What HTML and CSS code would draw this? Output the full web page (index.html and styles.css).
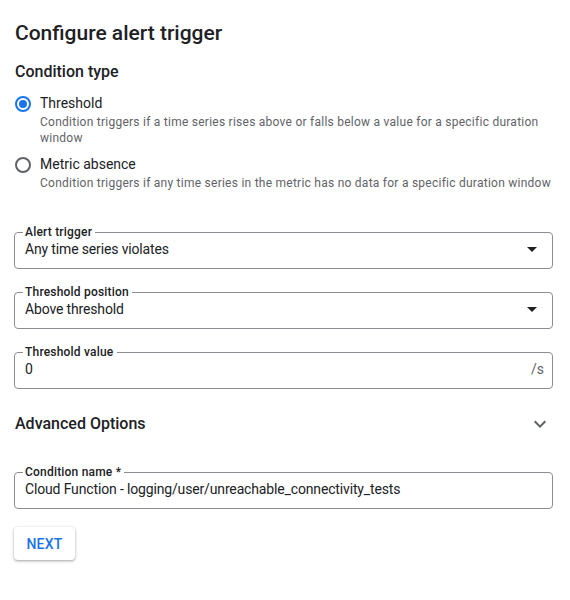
FILE: index.html
```html
<!DOCTYPE html>
<html lang="en">
<head>
  <meta charset="UTF-8" />
  <meta name="viewport" content="width=device-width, initial-scale=1.0" />
  <title>Configure alert trigger</title>
  <link rel="stylesheet" href="styles.css">
</head>
<body>
  <div class="panel">
    <h1 class="title">Configure alert trigger</h1>

    <h2 class="section-title">Condition type</h2>
    <div class="radio-group">
      <label class="radio-row">
        <span class="radio checked"></span>
        <span class="radio-text">
          <span class="radio-label">Threshold</span>
          <span class="radio-desc">Condition triggers if a time series rises above or falls below a value for a specific duration window</span>
        </span>
      </label>
      <label class="radio-row">
        <span class="radio"></span>
        <span class="radio-text">
          <span class="radio-label">Metric absence</span>
          <span class="radio-desc">Condition triggers if any time series in the metric has no data for a specific duration window</span>
        </span>
      </label>
    </div>

    <div class="fields">
      <fieldset class="field">
        <legend>Alert trigger</legend>
        <div class="field-row">
          <span class="field-value">Any time series violates</span>
          <span class="caret"></span>
        </div>
      </fieldset>
      <fieldset class="field">
        <legend>Threshold position</legend>
        <div class="field-row">
          <span class="field-value">Above threshold</span>
          <span class="caret"></span>
        </div>
      </fieldset>
      <fieldset class="field">
        <legend>Threshold value</legend>
        <div class="field-row">
          <span class="field-value">0</span>
          <span class="suffix">/s</span>
        </div>
      </fieldset>
    </div>

    <div class="advanced">
      <span>Advanced Options</span>
      <svg class="chevron" width="24" height="24" viewBox="0 0 24 24"><path d="M7.41 8.59 12 13.17l4.59-4.58L18 10l-6 6-6-6z" fill="#5f6368"/></svg>
    </div>

    <fieldset class="field name-field">
      <legend>Condition name *</legend>
      <div class="field-row">
        <span class="field-value">Cloud Function - logging/user/unreachable_connectivity_tests</span>
      </div>
    </fieldset>

    <button class="next-btn" type="button">NEXT</button>
  </div>
</body>
</html>
```

FILE: styles.css
```css
* {
  margin: 0;
  padding: 0;
  box-sizing: border-box;
}

body {
  font-family: Roboto, "Noto Sans", sans-serif;
  background: #fff;
  color: #202124;
}

.panel {
  width: 553px;
  padding: 19px 0 40px 14px;
}

.title {
  font-size: 21px;
  font-weight: 500;
  line-height: 28px;
  padding-left: 1px;
}

.section-title {
  margin-top: 13px;
  font-size: 16px;
  font-weight: 500;
  line-height: 24px;
  padding-left: 1px;
}

.radio-group {
  display: flex;
  flex-direction: column;
  gap: 8px;
  margin-top: 9px;
}

.radio-row {
  display: flex;
  gap: 9px;
  padding-left: 1px;
}

.radio {
  flex-shrink: 0;
  width: 16px;
  height: 16px;
  margin-top: 3px;
  border: 2px solid #5f6368;
  border-radius: 50%;
  display: flex;
  align-items: center;
  justify-content: center;
}

.radio.checked {
  border-color: #1a73e8;
}

.radio.checked::after {
  content: "";
  width: 8px;
  height: 8px;
  border-radius: 50%;
  background: #1a73e8;
}

.radio-text {
  display: flex;
  flex-direction: column;
}

.radio-label {
  font-size: 14px;
  line-height: 20px;
}

.radio-desc {
  margin-top: 1px;
  font-size: 12px;
  line-height: 16px;
  letter-spacing: 0.25px;
  color: #5f6368;
}

.fields {
  display: flex;
  flex-direction: column;
  gap: 16px;
  margin-top: 34px;
}

.field {
  border: 1px solid #8a8e93;
  border-radius: 4px;
  padding: 0 8px 9px 8px;
}

.field legend {
  font-size: 12px;
  font-weight: 500;
  line-height: 14px;
  letter-spacing: 0.2px;
  padding: 0 3px 0 2px;
  color: #202124;
}

.field-row {
  display: flex;
  align-items: center;
  justify-content: space-between;
  height: 20px;
  padding-left: 2px;
}

.field-value {
  font-size: 14px;
  letter-spacing: -0.15px;
  color: #202124;
}

.caret {
  width: 0;
  height: 0;
  margin-right: 7px;
  border-left: 5px solid transparent;
  border-right: 5px solid transparent;
  border-top: 5px solid #202124;
}

.suffix {
  font-size: 14px;
  color: #5f6368;
}

.advanced {
  display: flex;
  align-items: center;
  justify-content: space-between;
  margin-top: 23px;
  padding-left: 1px;
  font-size: 16px;
  font-weight: 500;
  line-height: 24px;
}

.chevron {
  margin-right: 1px;
}

.name-field {
  margin-top: 29px;
}

.next-btn {
  margin-top: 18px;
  width: 61px;
  height: 33px;
  border: none;
  border-radius: 4px;
  background: #fff;
  color: #1a73e8;
  font-family: Roboto, sans-serif;
  font-size: 14px;
  font-weight: 500;
  letter-spacing: 0.2px;
  box-shadow: 0 1px 2px rgba(60, 64, 67, 0.3), 0 1px 3px 1px rgba(60, 64, 67, 0.15);
}
```
